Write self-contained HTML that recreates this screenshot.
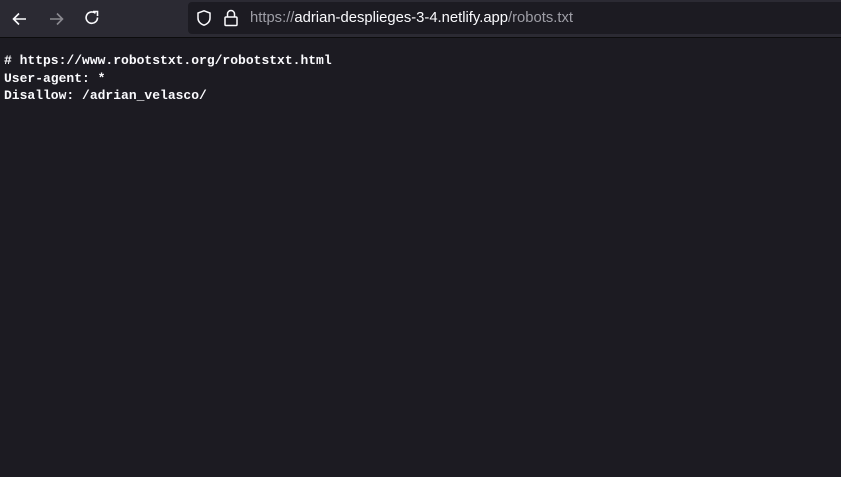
<!DOCTYPE html>
<html><head><style>
body{margin:0;width:841px;height:477px;background:#1c1b22;overflow:hidden;font-family:"Liberation Sans",sans-serif}
.tb{position:absolute;left:0;top:0;width:841px;height:37px;background:#2b2a33;border-bottom:1px solid #0c0c0d}
.url{position:absolute;left:188px;top:2px;width:660px;height:32px;background:#1c1b22;border-radius:4px}
.u{position:absolute;left:250px;top:10px;font-size:14.8px;color:#fbfbfe;white-space:nowrap}
.g{color:#9e9ea6}
pre{position:absolute;left:4px;top:52px;margin:0;font-family:"Liberation Mono",monospace;font-size:13px;font-weight:bold;line-height:17.5px;color:#fbfbfe}
svg{position:absolute}
</style></head><body>
<div class="tb">
<svg style="left:10px;top:9px" width="20" height="20" viewBox="0 0 20 20"><path d="M16 10H4M9 4.5L3.5 10 9 15.5" stroke="#fbfbfe" stroke-width="1.6" fill="none"/></svg>
<svg style="left:46px;top:9px" width="20" height="20" viewBox="0 0 20 20"><path d="M4 10h12M11 4.5l5.5 5.5L11 15.5" stroke="#8a8990" stroke-width="1.6" fill="none"/></svg>
<svg style="left:82px;top:8px" width="20" height="20" viewBox="0 0 20 20"><path d="M15.5 9.5A5.7 5.7 0 1 1 13.5 5.3" stroke="#fbfbfe" stroke-width="1.6" fill="none"/><path d="M11 3.5h4.5V8" stroke="#fbfbfe" stroke-width="1.6" fill="none"/></svg>
<div class="url"></div>
<svg style="left:195px;top:9px" width="18" height="18" viewBox="0 0 18 18"><path d="M9 1.8L3 4v5c0 3.5 2.7 6 6 7.2 3.3-1.2 6-3.7 6-7.2V4z" stroke="#fbfbfe" stroke-width="1.5" fill="none"/></svg>
<svg style="left:222px;top:8px" width="18" height="20" viewBox="0 0 18 20"><rect x="3" y="9" width="12" height="8.5" rx="1" stroke="#fbfbfe" stroke-width="1.5" fill="none"/><path d="M5.5 9V6a3.5 3.5 0 0 1 7 0v3" stroke="#fbfbfe" stroke-width="1.5" fill="none"/></svg>
<div class="u"><span class="g">https://</span>adrian-desplieges-3-4.netlify.app<span class="g">/robots.txt</span></div>
</div>
<pre># https://www.robotstxt.org/robotstxt.html
User-agent: *
Disallow: /adrian_velasco/</pre>
</body></html>
